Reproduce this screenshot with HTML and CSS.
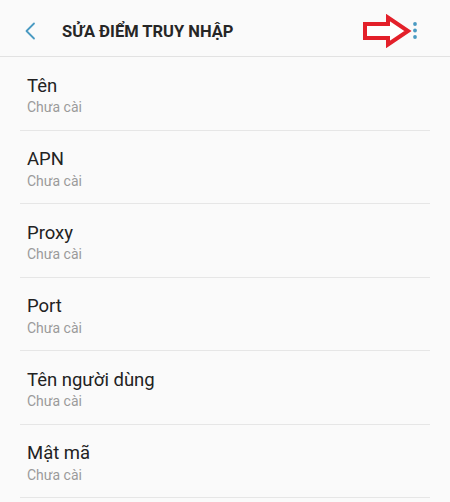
FILE: index.html
```html
<!DOCTYPE html>
<html lang="vi">
<head>
<meta charset="utf-8">
<title>Sửa điểm truy nhập</title>
<link rel="stylesheet" href="styles.css">
</head>
<body>
<header class="appbar">
  <svg class="back" width="12" height="18" viewBox="0 0 12 18"><path d="M10 1.5 L2.5 9 L10 16.5" fill="none" stroke="#4a9ac2" stroke-width="1.8" stroke-linecap="round" stroke-linejoin="round"/></svg>
  <h1 class="title">SỬA ĐIỂM TRUY NHẬP</h1>
  <div class="actions">
    <svg class="arrow" width="50" height="34" viewBox="0 0 50 34"><path d="M3 10 L26 10 L26 3.5 L46 17 L26 30.5 L26 24 L3 24 Z" fill="#ffffff" stroke="#e3202a" stroke-width="4" stroke-linejoin="miter"/></svg>
    <svg class="more" width="6" height="20" viewBox="0 0 6 20"><circle cx="3" cy="3" r="1.9" fill="#4a9ac2"/><circle cx="3" cy="9.5" r="1.9" fill="#4a9ac2"/><circle cx="3" cy="16" r="1.9" fill="#4a9ac2"/></svg>
  </div>
</header>
<main class="list">
  <div class="item"><div class="item-title">Tên</div><div class="item-sub">Chưa cài</div></div>
  <div class="item"><div class="item-title">APN</div><div class="item-sub">Chưa cài</div></div>
  <div class="item"><div class="item-title">Proxy</div><div class="item-sub">Chưa cài</div></div>
  <div class="item"><div class="item-title">Port</div><div class="item-sub">Chưa cài</div></div>
  <div class="item"><div class="item-title">Tên người dùng</div><div class="item-sub">Chưa cài</div></div>
  <div class="item"><div class="item-title">Mật mã</div><div class="item-sub">Chưa cài</div></div>
</main>
</body>
</html>
```
FILE: styles.css
```css
html, body {
  margin: 0;
  padding: 0;
  background: #fafafa;
}
body {
  font-family: Roboto, "Noto Sans", "Liberation Sans", sans-serif;
  width: 450px;
  height: 502px;
  overflow: hidden;
}
.appbar {
  height: 50px;
  padding: 6px 32px 0 24px;
  border-bottom: 1px solid #e2e2e2;
  display: flex;
  align-items: center;
  box-sizing: content-box;
}
.back {
  display: block;
}
.title {
  margin: 0 0 0 26px;
  font-size: 16.5px;
  font-weight: 700;
  color: #262626;
  letter-spacing: 0;
  flex: 1;
}
.actions {
  display: flex;
  align-items: center;
}
.arrow {
  display: block;
}
.more {
  display: block;
  margin-top: -1px;
}
.list {
  padding: 0 20px;
}
.item {
  border-bottom: 1px solid #e6e6e6;
  padding: 17.5px 0 0 7px;
  box-sizing: border-box;
  height: 73.5px;
}
.item-title {
  font-size: 18.5px;
  line-height: 22px;
  color: #222222;
}
.item-sub {
  font-size: 14px;
  line-height: 16px;
  margin-top: 2.5px;
  color: #9a9a9a;
}
```
